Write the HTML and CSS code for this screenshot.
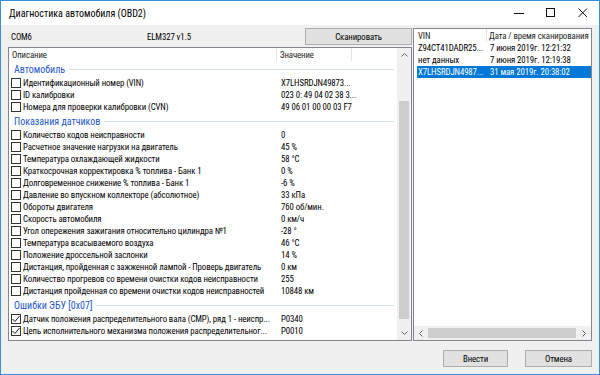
FILE: index.html
```html
<!DOCTYPE html>
<html lang="ru">
<head>
    <meta charset="UTF-8">
    <title>Диагностика автомобиля (OBD2)</title>
    <link rel="stylesheet" href="styles.css">
</head>
<body>
    <div class="window">
        <div class="titlebar">
            <span class="title">Диагностика автомобиля (OBD2)</span>
            <div class="caption-buttons">
                <span class="cap"><svg width="10" height="10" viewBox="0 0 10 10"><line x1="0" y1="5.5" x2="10" y2="5.5" stroke="#111" stroke-width="1"/></svg></span>
                <span class="cap"><svg width="10" height="10" viewBox="0 0 10 10"><rect x="0.5" y="0.5" width="8" height="8" fill="none" stroke="#111" stroke-width="1"/></svg></span>
                <span class="cap"><svg width="10" height="10" viewBox="0 0 10 10"><path d="M0.5 0.5 L9 9 M9 0.5 L0.5 9" stroke="#111" stroke-width="1"/></svg></span>
            </div>
        </div>

        <div class="content">
            <div class="main">
                <div class="left">
                    <div class="toolbar">
                        <span class="port">COM6</span>
                        <span class="adapter">ELM327 v1.5</span>
                        <button class="btn scan">Сканировать</button>
                    </div>

                    <div class="list params">
                        <div class="list-inner">
                            <div class="list-head">
                                <span class="col-desc">Описание</span>
                                <span class="col-val">Значение</span>
                            </div>

                            <div class="group"><span>Автомобиль</span></div>
                            <div class="row"><span class="check"></span><span class="desc">Идентификационный номер (VIN)</span><span class="val">X7LHSRDJN49873...</span></div>
                            <div class="row"><span class="check"></span><span class="desc">ID калибровки</span><span class="val">023 0: 49 04 02 38 3...</span></div>
                            <div class="row"><span class="check"></span><span class="desc">Номера для проверки калибровки (CVN)</span><span class="val">49 06 01 00 00 03 F7</span></div>

                            <div class="group"><span>Показания датчиков</span></div>
                            <div class="row"><span class="check"></span><span class="desc">Количество кодов неисправности</span><span class="val">0</span></div>
                            <div class="row"><span class="check"></span><span class="desc">Расчетное значение нагрузки на двигатель</span><span class="val">45 %</span></div>
                            <div class="row"><span class="check"></span><span class="desc">Температура охлаждающей жидкости</span><span class="val">58 °C</span></div>
                            <div class="row"><span class="check"></span><span class="desc">Краткосрочная корректировка % топлива - Банк 1</span><span class="val">0 %</span></div>
                            <div class="row"><span class="check"></span><span class="desc">Долговременное снижение % топлива - Банк 1</span><span class="val">-6 %</span></div>
                            <div class="row"><span class="check"></span><span class="desc">Давление во впускном коллекторе (абсолютное)</span><span class="val">33 кПа</span></div>
                            <div class="row"><span class="check"></span><span class="desc">Обороты двигателя</span><span class="val">760 об/мин.</span></div>
                            <div class="row"><span class="check"></span><span class="desc">Скорость автомобиля</span><span class="val">0 км/ч</span></div>
                            <div class="row"><span class="check"></span><span class="desc">Угол опережения зажигания относительно цилиндра №1</span><span class="val">-28 °</span></div>
                            <div class="row"><span class="check"></span><span class="desc">Температура всасываемого воздуха</span><span class="val">46 °C</span></div>
                            <div class="row"><span class="check"></span><span class="desc">Положение дроссельной заслонки</span><span class="val">14 %</span></div>
                            <div class="row"><span class="check"></span><span class="desc">Дистанция, пройденная с зажженной лампой - Проверь двигатель</span><span class="val">0 км</span></div>
                            <div class="row"><span class="check"></span><span class="desc">Количество прогревов со времени очистки кодов неисправности</span><span class="val">255</span></div>
                            <div class="row"><span class="check"></span><span class="desc">Дистанция пройденная со времени очистки кодов неисправностей</span><span class="val">10848 км</span></div>

                            <div class="group"><span>Ошибки ЭБУ [0x07]</span></div>
                            <div class="row"><span class="check checked"><svg width="8" height="8" viewBox="0 0 8 8"><polyline points="0.5,4 3,6.5 7.5,1" fill="none" stroke="#222" stroke-width="1"/></svg></span><span class="desc">Датчик положения распределительного вала (CMP), ряд 1 - неиспр...</span><span class="val">P0340</span></div>
                            <div class="row"><span class="check checked"><svg width="8" height="8" viewBox="0 0 8 8"><polyline points="0.5,4 3,6.5 7.5,1" fill="none" stroke="#222" stroke-width="1"/></svg></span><span class="desc">Цепь исполнительного механизма положения распределительног...</span><span class="val">P0010</span></div>
                        </div>

                        <div class="vscroll">
                            <span class="arrow"><svg width="7" height="4" viewBox="0 0 7 4"><polyline points="0.5,3.5 3.5,0.5 6.5,3.5" fill="none" stroke="#606060" stroke-width="1"/></svg></span>
                            <div class="track"><div class="thumb"></div></div>
                            <span class="arrow"><svg width="7" height="4" viewBox="0 0 7 4"><polyline points="0.5,0.5 3.5,3.5 6.5,0.5" fill="none" stroke="#606060" stroke-width="1"/></svg></span>
                        </div>
                    </div>
                </div>

                <div class="list history">
                    <div class="list-head">
                        <span class="col-vin">VIN</span>
                        <span class="col-date">Дата / время сканирования</span>
                    </div>
                    <div class="hrow"><span class="vin">Z94CT41DADR25...</span><span class="date">7 июня 2019г. 12:21:32</span></div>
                    <div class="hrow"><span class="vin">нет данных</span><span class="date">7 июня 2019г. 12:19:38</span></div>
                    <div class="hrow selected"><span class="vin">X7LHSRDJN4987...</span><span class="date">31 мая 2019г. 20:38:02</span></div>
                    <div class="filler"></div>
                    <div class="hscroll">
                        <span class="arrow"><svg width="4" height="7" viewBox="0 0 4 7"><polyline points="3.5,0.5 0.5,3.5 3.5,6.5" fill="none" stroke="#606060" stroke-width="1"/></svg></span>
                        <div class="track"><div class="thumb"></div></div>
                        <span class="arrow"><svg width="4" height="7" viewBox="0 0 4 7"><polyline points="0.5,0.5 3.5,3.5 0.5,6.5" fill="none" stroke="#606060" stroke-width="1"/></svg></span>
                    </div>
                </div>
            </div>

            <div class="footer">
                <button class="btn ok">Внести</button>
                <button class="btn cancel">Отмена</button>
            </div>
        </div>
    </div>
</body>
</html>
```

FILE: styles.css
```css
* {
    margin: 0;
    padding: 0;
    box-sizing: border-box;
}

body {
    font-family: 'Roboto', 'Noto Sans', sans-serif;
    font-size: 8.8px;
    font-stretch: 87%;
    letter-spacing: -0.1px;
    color: #000;
    background: #fff;
    width: 600px;
    height: 375px;
    overflow: hidden;
}

.window {
    width: 600px;
    height: 375px;
    border: 1px solid #3a8fd9;
    display: flex;
    flex-direction: column;
    background: #f0f0f0;
}

.titlebar {
    height: 24px;
    background: #fff;
    display: flex;
    align-items: center;
    padding-left: 8px;
}

.title {
    flex: 1;
    font-size: 10px;
    letter-spacing: 0;
}

.caption-buttons {
    display: flex;
    height: 100%;
}

.cap {
    width: 32px;
    display: flex;
    align-items: center;
    justify-content: center;
}

.content {
    flex: 1;
    display: flex;
    flex-direction: column;
    padding: 3px 7px 7px 7px;
}

.main {
    display: flex;
    gap: 1px;
    height: 313px;
}

.left {
    width: 404px;
    display: flex;
    flex-direction: column;
}

.toolbar {
    height: 17px;
    margin-bottom: 2px;
    display: flex;
    align-items: center;
}

.port {
    width: 139px;
    padding-left: 3px;
}

.btn {
    font-family: inherit;
    font-size: 8.8px;
    font-stretch: inherit;
    letter-spacing: inherit;
    color: #000;
    background: #e1e1e1;
    border: 1px solid #adadad;
    height: 17px;
}

.scan {
    margin-left: auto;
    width: 107px;
}

.list {
    background: #fff;
    border: 1px solid #828790;
}

.params {
    flex: 1;
    display: flex;
    overflow: hidden;
}

.list-inner {
    flex: 1;
    overflow: hidden;
}

.list-head {
    height: 13px;
    display: flex;
    align-items: center;
    color: #1e1e1e;
}

.col-desc {
    width: 268px;
    padding-left: 3px;
    border-right: 1px solid #e5e5e5;
    height: 100%;
    display: flex;
    align-items: center;
}

.col-val {
    width: 75px;
    padding-left: 3px;
    border-right: 1px solid #e5e5e5;
    height: 100%;
    display: flex;
    align-items: center;
}

.group {
    height: 16px;
    display: flex;
    align-items: center;
    padding-left: 5px;
    padding-right: 3px;
    color: #2458c8;
    font-size: 10px;
    letter-spacing: 0;
}

.group::after {
    content: "";
    flex: 1;
    height: 1px;
    background: #d5dfeb;
    margin-left: 4px;
}

.row {
    height: 12px;
    display: flex;
    align-items: center;
    white-space: nowrap;
}

.check {
    width: 10px;
    height: 10px;
    margin-left: 2px;
    margin-right: 1px;
    border: 1px solid #333;
    background: #fff;
    display: flex;
    align-items: center;
    justify-content: center;
    flex-shrink: 0;
}

.desc {
    width: 255px;
    padding-left: 1px;
    overflow: hidden;
}

.val {
    padding-left: 4px;
}

.vscroll {
    width: 14px;
    background: #f0f0f0;
    display: flex;
    flex-direction: column;
}

.vscroll .arrow {
    height: 14px;
    display: flex;
    align-items: center;
    justify-content: center;
}

.vscroll .track {
    flex: 1;
    padding: 39px 2px 0 2px;
}

.vscroll .thumb {
    height: 218px;
    background: #cdcdcd;
}

.history {
    width: 179px;
    display: flex;
    flex-direction: column;
    white-space: nowrap;
    overflow: hidden;
}

.col-vin {
    width: 73px;
    padding-left: 4px;
    border-right: 1px solid #e5e5e5;
    height: 100%;
    display: flex;
    align-items: center;
}

.col-date {
    padding-left: 2px;
}

.hrow {
    height: 12px;
    margin-left: 3px;
    display: flex;
    align-items: center;
}

.hrow.selected {
    background: #0078d7;
    color: #fff;
}

.vin {
    width: 70px;
    padding-left: 1px;
    overflow: hidden;
}

.date {
    padding-left: 3px;
}

.filler {
    flex: 1;
}

.hscroll {
    height: 14px;
    background: #f0f0f0;
    display: flex;
}

.hscroll .arrow {
    width: 14px;
    display: flex;
    align-items: center;
    justify-content: center;
}

.hscroll .track {
    flex: 1;
    padding: 2px 1px 2px 0;
}

.hscroll .thumb {
    height: 100%;
    background: #cdcdcd;
}

.footer {
    margin-top: 9px;
    display: flex;
    justify-content: flex-end;
    gap: 17px;
}

.ok {
    width: 65px;
}

.cancel {
    width: 67px;
}
```
